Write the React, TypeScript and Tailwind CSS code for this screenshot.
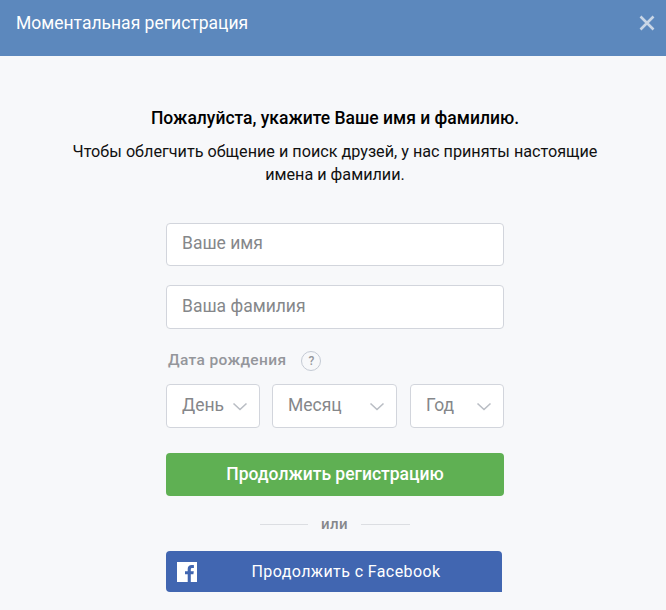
import React from 'react';

const dateFields = [
  { label: 'День', width: 'w-[94px]' },
  { label: 'Месяц', width: 'w-[125px] ml-[12px] mr-auto' },
  { label: 'Год', width: 'w-[94px]' },
];

function Chevron() {
  return (
    <svg width="16" height="9" viewBox="0 0 16 9" fill="none" className="shrink-0">
      <path d="M1.5 1.5 8 7.5l6.5-6" stroke="#b9bdc4" strokeWidth="1.6" />
    </svg>
  );
}

export default function App() {
  return (
    <div className="w-[666px] h-[610px] overflow-hidden bg-[#f7f8fa] font-['Roboto',sans-serif]">
      <header className="h-[56px] bg-[#5c88bd] flex items-start justify-between pl-4 pr-[11px] pt-[12px]">
        <h1 className="text-[17.5px] leading-[22px] text-white font-normal">Моментальная регистрация</h1>
        <svg width="16" height="16" viewBox="0 0 16 16" className="mt-[3px]">
          <path d="M1.5 1.5l13 13M14.5 1.5l-13 13" stroke="#c9d6e6" strokeWidth="2.6" />
        </svg>
      </header>

      <main className="flex flex-col items-center pl-[4px]">
        <h2 className="mt-[50px] text-[17.5px] leading-[24px] font-medium text-black">
          Пожалуйста, укажите Ваше имя и фамилию.
        </h2>
        <p className="mt-[10px] w-[535px] text-center text-[16.2px] leading-[23px] text-[#111]">
          Чтобы облегчить общение и поиск друзей, у нас приняты настоящие имена и фамилии.
        </p>

        <form className="mt-[37px] w-[338px] flex flex-col">
          <div className="h-[43px] flex items-center rounded-[4px] border border-[#d2d5dc] bg-white px-[15px] pb-[2px] text-[17.5px] text-[#85878a]">
            Ваше имя
          </div>
          <div className="mt-[19px] h-[44px] flex items-center rounded-[4px] border border-[#d2d5dc] bg-white px-[15px] pb-[2px] text-[17.5px] text-[#85878a]">
            Ваша фамилия
          </div>

          <div className="mt-[21px] h-[21px] flex items-center pl-[2px]">
            <span className="text-[15.5px] font-medium tracking-[0.35px] text-[#94969b]">Дата рождения</span>
            <span className="ml-[15px] w-[20px] h-[20px] rounded-full border border-[#c4cad4] flex items-center justify-center text-[12px] font-medium text-[#94969b]">
              ?
            </span>
          </div>

          <div className="mt-[13px] flex">
            {dateFields.map((field) => (
              <div
                key={field.label}
                className={`${field.width} h-[44px] flex items-center justify-between rounded-[4px] border border-[#d2d5dc] bg-white pl-[15px] pr-[11px] text-[17.5px] text-[#85878a]`}
              >
                <span className="pb-[2px]">{field.label}</span>
                <Chevron />
              </div>
            ))}
          </div>

          <button
            type="button"
            className="mt-[25px] h-[43px] rounded-[4px] bg-[#5fb053] text-[17.5px] font-medium text-white"
          >
            Продолжить регистрацию
          </button>

          <div className="mt-[18px] h-[20px] flex items-center justify-center text-[15px] font-medium tracking-[0.4px] text-[#85878a]">
            <span className="w-[48px] h-px bg-[#dcdee2]" />
            <span className="mx-[13px]">или</span>
            <span className="w-[49px] h-px bg-[#dcdee2]" />
          </div>

          <button
            type="button"
            className="mt-[17px] w-[336px] h-[41px] rounded-l-[4px] rounded-tr-[4px] bg-[#4166b1] flex items-center pl-[11px] pr-[7px] text-white"
          >
            <svg width="20" height="20" viewBox="0 0 20 20" className="shrink-0">
              <path
                fill="#fff"
                d="M0 0h20v20h-6.2v-7.7h2.6l.4-3h-3V7.4c0-.9.2-1.5 1.5-1.5h1.6V3.2c-.3 0-1.2-.1-2.3-.1-2.3 0-3.9 1.4-3.9 4v2.2H8v3h2.7V20H0z"
              />
            </svg>
            <span className="flex-1 text-center text-[16px] tracking-[0.4px]">Продолжить с Facebook</span>
          </button>
        </form>
      </main>
    </div>
  );
}
